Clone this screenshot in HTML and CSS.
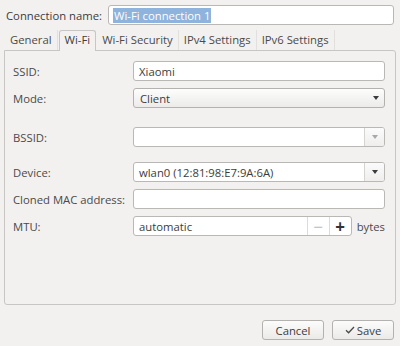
FILE: index.html
```html
<!DOCTYPE html>
<html lang="en">
<head>
  <meta charset="UTF-8">
  <title>Editing Wi-Fi connection 1</title>
  <link rel="stylesheet" href="styles.css">
</head>
<body>
  <div class="dialog">
    <div class="name-row">
      <label class="name-label">Connection name:</label>
      <div class="entry name-entry"><span class="selected">Wi-Fi connection 1</span></div>
    </div>

    <div class="tabs">
      <div class="tab">General</div>
      <div class="tab active">Wi-Fi</div>
      <div class="tab">Wi-Fi Security</div>
      <div class="tab">IPv4 Settings</div>
      <div class="tab">IPv6 Settings</div>
    </div>

    <div class="panel">
      <div class="form">
        <label class="label">SSID:</label>
        <div class="entry">Xiaomi</div>

        <label class="label">Mode:</label>
        <div class="combo">
          <span>Client</span>
          <span class="arrow"></span>
        </div>

        <label class="label gap-lg">BSSID:</label>
        <div class="combo-entry gap-lg">
          <span class="text"></span>
          <span class="drop"><span class="arrow dim"></span></span>
        </div>

        <label class="label gap-md">Device:</label>
        <div class="combo-entry gap-md">
          <span class="text">wlan0 (12:81:98:E7:9A:6A)</span>
          <span class="drop"><span class="arrow"></span></span>
        </div>

        <label class="label">Cloned MAC address:</label>
        <div class="entry"></div>

        <label class="label">MTU:</label>
        <div class="spin-row">
          <div class="spin">
            <span class="text">automatic</span>
            <span class="spin-btn minus">&minus;</span>
            <span class="spin-btn plus">+</span>
          </div>
          <span class="unit">bytes</span>
        </div>
      </div>
    </div>

    <div class="footer">
      <button class="btn">Cancel</button>
      <button class="btn">
        <svg class="check" viewBox="0 0 10 8" fill="none">
          <path d="M1 4.2 L3.6 6.8 L9 1" stroke="#4a4a4a" stroke-width="1.3"/>
        </svg>Save
      </button>
    </div>
  </div>
</body>
</html>
```

FILE: styles.css
```css
* {
  margin: 0;
  padding: 0;
  box-sizing: border-box;
}

body {
  font-family: "Open Sans", "Noto Sans", sans-serif;
  font-size: 11.3px;
  color: #3c3c3c;
  background-color: #f2f1f0;
  width: 400px;
  height: 346px;
  overflow: hidden;
}

.dialog {
  padding: 5px 4px 0 4px;
}

.name-row {
  display: flex;
  align-items: center;
  height: 20px;
}

.name-label {
  width: 104px;
  padding-left: 2px;
}

.entry,
.combo,
.combo-entry,
.spin {
  height: 20px;
  border: 1px solid #bab8b4;
  border-radius: 3px;
  background-color: #fff;
  display: flex;
  align-items: center;
}

.entry {
  padding-left: 5px;
}

.name-entry {
  flex: 1;
  margin-right: 2px;
  padding-left: 4px;
}

.selected {
  background-color: #8eb3dc;
  color: #fff;
  padding: 0 1px;
  line-height: 15px;
}

/* tabs */
.tabs {
  display: flex;
  height: 20px;
  margin-top: 5px;
  padding-left: 1px;
}

.tab {
  padding: 0 5px;
  line-height: 20px;
  border-right: 1px solid #e2e0dd;
  color: #4a4a4a;
}

.tab.active {
  border: 1px solid #c8c6c2;
  border-bottom: none;
  border-radius: 3px 3px 0 0;
  background-color: #f2f1f0;
  line-height: 18px;
  margin: 0 1px -1px 1px;
  height: 21px;
  position: relative;
  color: #3c3c3c;
}

.panel {
  height: 255px;
  border: 1px solid #c8c6c2;
  border-radius: 0 3px 3px 3px;
  background-color: #f2f1f0;
}

.form {
  display: grid;
  grid-template-columns: 120px 252px;
  row-gap: 7px;
  padding: 10px 0 0 8px;
  align-items: center;
}

.label {
  color: #4a4a4a;
}

.gap-lg {
  margin-top: 12px;
}

.gap-md {
  margin-top: 8px;
}

/* combo button */
.combo {
  justify-content: space-between;
  padding: 0 5px 0 6px;
  background: linear-gradient(#fdfdfd, #ecebea);
  border-color: #b4b2ae;
}

.arrow {
  width: 0;
  height: 0;
  border-left: 3.5px solid transparent;
  border-right: 3.5px solid transparent;
  border-top: 4px solid #3c3c3c;
}

.arrow.dim {
  border-top-color: #a8a8a8;
}

/* combo with entry */
.combo-entry .text {
  flex: 1;
  padding-left: 5px;
}

.combo-entry .drop {
  width: 20px;
  height: 100%;
  display: flex;
  align-items: center;
  justify-content: center;
  border-left: 1px solid #d6d4d0;
  background: linear-gradient(#fbfbfb, #efeeed);
  border-radius: 0 2px 2px 0;
}

/* spin button */
.spin-row {
  display: flex;
  align-items: center;
}

.spin {
  width: 220px;
}

.spin .text {
  flex: 1;
  padding-left: 5px;
}

.spin-btn {
  width: 22px;
  height: 100%;
  display: flex;
  align-items: center;
  justify-content: center;
  border-left: 1px solid #dedcd8;
  font-size: 17px;
  font-weight: bold;
}

.spin-btn.minus {
  color: #b8b8b8;
  font-weight: normal;
}

.spin-btn.plus {
  color: #333;
}

.unit {
  margin-left: 5px;
  color: #4a4a4a;
}

/* footer */
.footer {
  display: flex;
  justify-content: flex-end;
  gap: 8px;
  margin-top: 15px;
  padding-right: 2px;
}

.btn {
  width: 62px;
  height: 20px;
  font-family: inherit;
  font-size: 11.3px;
  color: #3c3c3c;
  border: 1px solid #b4b2ae;
  border-radius: 3px;
  background: linear-gradient(#fcfcfc, #ebeae8);
  display: flex;
  align-items: center;
  justify-content: center;
}

.check {
  width: 10px;
  height: 8px;
  margin-right: 2px;
}
```
